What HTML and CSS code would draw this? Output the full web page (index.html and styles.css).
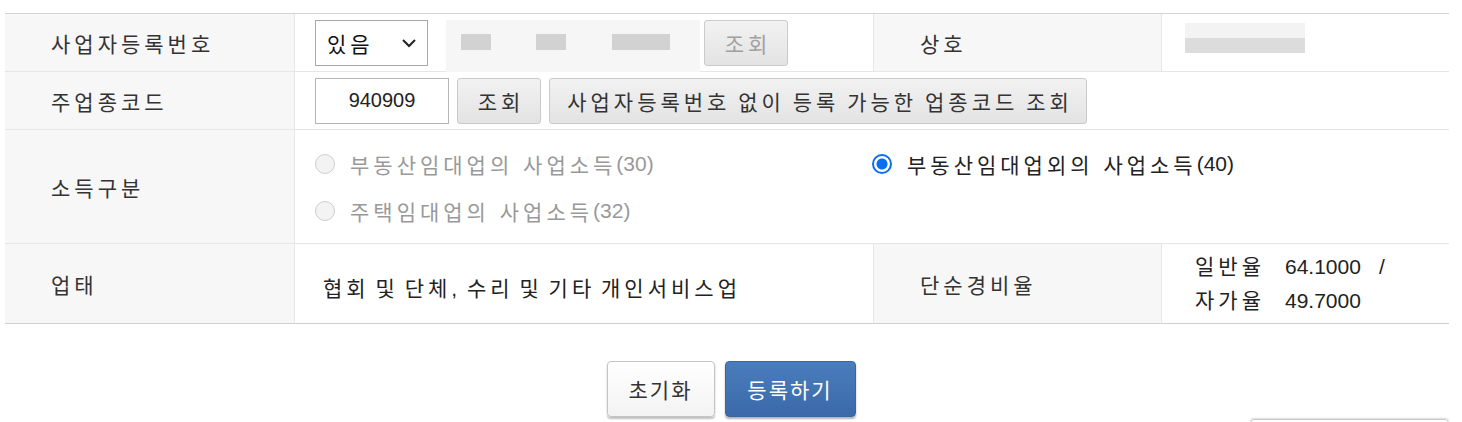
FILE: index.html
```html
<!DOCTYPE html>
<html>
	<head>
		<meta charset="UTF-8">
		<title>사업자 정보 등록</title>
		<link rel="stylesheet" href="styles.css">
	</head>
	<body>
		<div class="page">
			<div class="form-grid">
				<!-- 1행 -->
				<div class="th">사업자등록번호</div>
				<div class="td">
					<div class="select">
						<span>있음</span>
						<svg width="16" height="10" viewBox="0 0 16 10"><path d="M2 2 L8 8 L14 2" fill="none" stroke="#222" stroke-width="2"/></svg>
					</div>
					<div class="mosaic">
						<span class="m-dark m1"></span>
						<span class="m-dark m2"></span>
						<span class="m-dark m3"></span>
					</div>
					<button class="btn btn-sm is-disabled">조회</button>
				</div>
				<div class="th th-side">상호</div>
				<div class="td">
					<div class="mosaic-name"><span class="top"></span><span class="bottom"></span></div>
				</div>

				<!-- 2행 -->
				<div class="th">주업종코드</div>
				<div class="td span3">
					<input class="code-input" type="text" value="940909">
					<button class="btn btn-sm">조회</button>
					<button class="btn btn-wide">사업자등록번호 없이 등록 가능한 업종코드 조회</button>
				</div>

				<!-- 3행 -->
				<div class="th">소득구분</div>
				<div class="td span3">
					<div class="radio-group">
						<label class="radio-item is-disabled"><span class="radio"></span>부동산임대업의 사업소득<span class="num">(30)</span></label>
						<label class="radio-item"><span class="radio checked"></span>부동산임대업외의 사업소득<span class="num">(40)</span></label>
						<label class="radio-item is-disabled"><span class="radio"></span>주택임대업의 사업소득<span class="num">(32)</span></label>
					</div>
				</div>

				<!-- 4행 -->
				<div class="th">업태</div>
				<div class="td td-text">협회 및 단체, 수리 및 기타 개인서비스업</div>
				<div class="th th-side">단순경비율</div>
				<div class="td td-rate">
					<div class="rate-line"><span class="rate-name">일반율</span><span class="num">64.1000</span><span class="slash">/</span></div>
					<div class="rate-line"><span class="rate-name">자가율</span><span class="num">49.7000</span></div>
				</div>
			</div>

			<div class="actions">
				<button class="btn-lg btn-reset">초기화</button>
				<button class="btn-lg btn-submit">등록하기</button>
			</div>

			<div class="float-wrap">
				<div class="float-box"></div>
			</div>
		</div>
	</body>
</html>
```

FILE: styles.css
```css
* {
	margin: 0;
	padding: 0;
	box-sizing: border-box;
}

body {
	background: #fff;
	color: #333;
	font-family: "Liberation Sans", "Noto Sans CJK KR", sans-serif;
	font-size: 21px;
	letter-spacing: 4px;
}

.page {
	padding: 13px 13px 0 5px;
}

.num {
	letter-spacing: 0;
}

/* 표 */
.form-grid {
	display: grid;
	grid-template-columns: 290px 578px 289px 287px;
	grid-template-rows: 58px 58px 114px 80px;
	border-top: 1px solid #d4d4d4;
}

.th,
.td {
	display: flex;
	align-items: center;
	border-bottom: 1px solid #e6e6e6;
}

.form-grid > div:nth-last-child(-n+4) {
	border-bottom-color: #cfcfcf;
}

.th {
	background: #f7f7f7;
	padding-left: 46px;
	border-right: 1px solid #e6e6e6;
}

.th-side {
	padding-left: 46px;
	border-left: 1px solid #e6e6e6;
}

.td {
	padding-left: 20px;
}

.span3 {
	grid-column: span 3;
}

/* 선택상자 */
.select {
	width: 113px;
	height: 46px;
	border: 1px solid #a8a8a8;
	background: #fff;
	display: flex;
	align-items: center;
	justify-content: space-between;
	padding: 0 10px 0 11px;
	color: #111;
}

.select svg {
	display: block;
}

/* 가려진 번호 */
.mosaic {
	width: 254px;
	height: 52px;
	margin: 6px 4px 0 18px;
	background: #f6f6f6;
	display: flex;
	align-items: flex-start;
	padding-top: 14px;
}

.m-dark {
	display: block;
	height: 16px;
	background: #d2d2d2;
}

.m1 { width: 30px; margin-left: 15px; }
.m2 { width: 30px; margin-left: 45px; }
.m3 { width: 58px; margin-left: 46px; }

.mosaic-name {
	margin-left: 3px;
	margin-top: -9px;
	width: 120px;
}

.mosaic-name span {
	display: block;
	height: 15px;
}

.mosaic-name .top {
	background: #f3f3f3;
}

.mosaic-name .bottom {
	background: #dcdcdc;
}

/* 버튼 */
.btn {
	height: 46px;
	border: 1px solid #cacaca;
	border-radius: 3px;
	background: linear-gradient(#f2f2f2, #e3e3e3);
	font-family: inherit;
	font-size: 21px;
	letter-spacing: 4px;
	color: #333;
}

.btn-sm {
	width: 84px;
	padding-left: 4px;
}

.btn-wide {
	width: 538px;
	margin-left: 8px;
	padding-left: 4px;
	word-spacing: -2px;
}

.is-disabled.btn {
	color: #a0a0a0;
}

.code-input {
	width: 134px;
	height: 46px;
	border: 1px solid #b5b5b5;
	font-family: inherit;
	font-size: 20px;
	text-align: center;
	color: #222;
	margin-right: 8px;
	outline: none;
}

/* 라디오 */
.radio-group {
	display: grid;
	grid-template-columns: 557px auto;
	row-gap: 17px;
	margin-top: 2px;
}

.radio-item {
	display: flex;
	align-items: center;
	color: #222;
}

.radio-item.is-disabled {
	color: #999;
}

.radio {
	width: 20px;
	height: 20px;
	border-radius: 50%;
	border: 1px solid #cdcdcd;
	background: #f3f3f3;
	margin-right: 15px;
	flex: none;
}

.radio.checked {
	border: 2px solid #0b6ef0;
	background: radial-gradient(circle, #0b6ef0 0, #0b6ef0 5px, #fff 6px);
}

/* 업태, 경비율 */
.td-text {
	padding-left: 28px;
	padding-top: 6px;
	color: #222;
	word-spacing: -4px;
}

.td-rate {
	flex-direction: column;
	align-items: flex-start;
	justify-content: center;
	padding-left: 33px;
	color: #222;
	line-height: 34px;
}

.rate-name {
	margin-right: 20px;
}

.slash {
	margin-left: 18px;
}

/* 하단 버튼 */
.actions {
	display: flex;
	justify-content: center;
	gap: 10px;
	margin-top: 37px;
	padding-left: 8px;
}

.btn-lg {
	height: 56px;
	border-radius: 4px;
	font-family: inherit;
	font-size: 21px;
	letter-spacing: 2px;
}

.btn-reset {
	width: 108px;
	border: 1px solid #c4c4c4;
	background: linear-gradient(#fff, #f3f3f3);
	color: #333;
	box-shadow: 0 2px 2px rgba(0, 0, 0, 0.25);
}

.btn-submit {
	width: 131px;
	border: 1px solid #3a66a0;
	background: linear-gradient(#4a7dbd, #3b69a9);
	color: #fff;
	box-shadow: 0 2px 2px rgba(0, 0, 0, 0.3);
}

.float-wrap {
	display: flex;
	justify-content: flex-end;
	margin-top: 2px;
}

.float-box {
	width: 199px;
	height: 40px;
	border: 1px solid #c9c9c9;
	border-radius: 4px;
	box-shadow: 0 -1px 2px rgba(0, 0, 0, 0.15);
}
```
